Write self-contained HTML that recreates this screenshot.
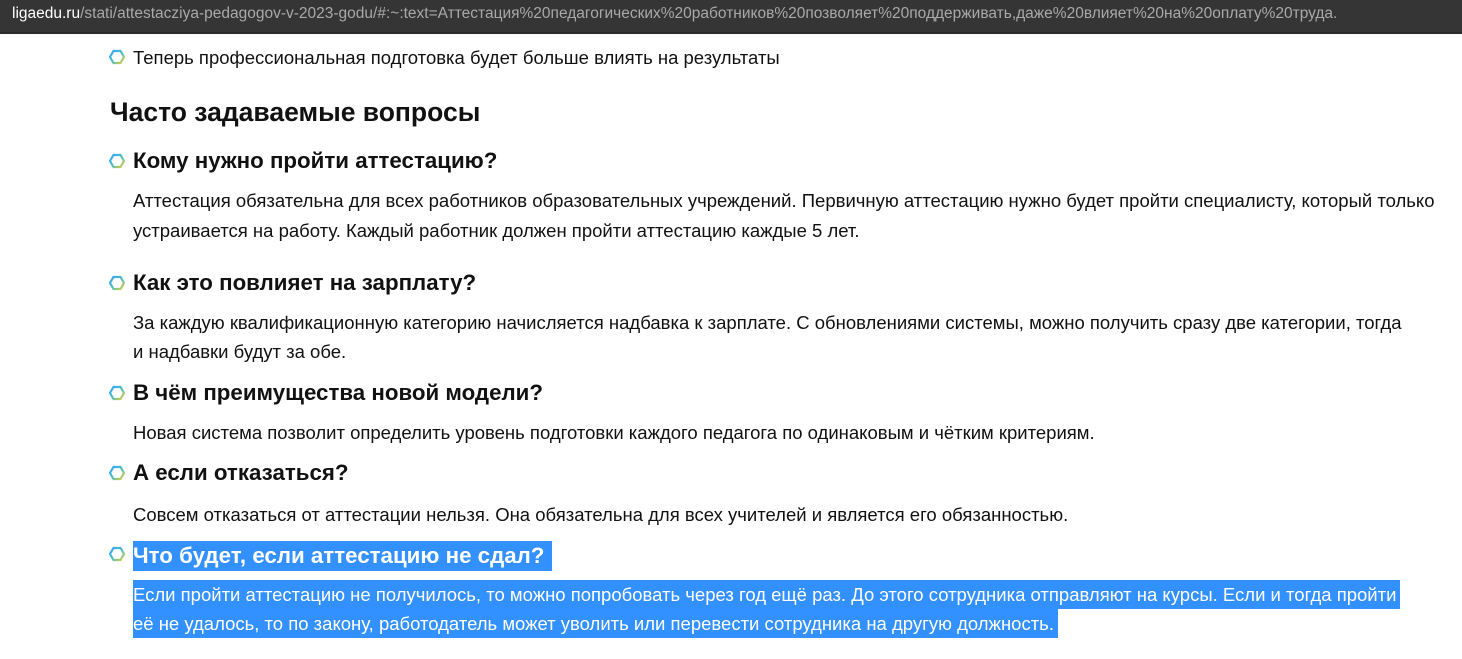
<!DOCTYPE html>
<html><head><meta charset="utf-8"><style>
body{margin:0;width:1462px;height:659px;overflow:hidden;background:#fff;font-family:"Liberation Sans",sans-serif;color:#111;position:relative}
.bar{position:absolute;left:0;top:0;width:1462px;height:32px;background:#353535;border-bottom:2px solid #2a2a2a}
.url{position:absolute;left:12px;top:5px;font-size:15.5px;color:#a9a9a9;white-space:nowrap}
.url b{font-weight:normal;color:#fff}
.t{position:absolute;white-space:nowrap}
.p{font-size:18.5px;left:133px}
.h3{font-size:22.3px;font-weight:bold;left:133px}
.hex{position:absolute;left:109px;width:16px;height:16px}
.sel{background:#3390ff;color:#fff}
</style></head><body>
<div class="bar"><div class="url"><b>ligaedu.ru</b>/stati/attestacziya-pedagogov-v-2023-godu/#:~:text=Аттестация%20педагогических%20работников%20позволяет%20поддерживать,даже%20влияет%20на%20оплату%20труда.</div></div>

<svg width="0" height="0" style="position:absolute"><defs><linearGradient id="g" x1="0" y1="0" x2="1" y2="1"><stop offset="0" stop-color="#3aa0ff"/><stop offset="0.5" stop-color="#4cc0c0"/><stop offset="1" stop-color="#e0d040"/></linearGradient></defs></svg>

<svg class="hex" style="top:49px" viewBox="0 0 16 16"><polygon points="4.5,2 11.5,2 15,8 11.5,14 4.5,14 1,8" fill="none" stroke="url(#g)" stroke-width="2.2"/></svg>
<div class="t p" style="top:47px">Теперь профессиональная подготовка будет больше влиять на результаты</div>

<div class="t" style="left:110px;top:97px;font-size:26.5px;font-weight:bold">Часто задаваемые вопросы</div>

<svg class="hex" style="top:153px" viewBox="0 0 16 16"><polygon points="4.5,2 11.5,2 15,8 11.5,14 4.5,14 1,8" fill="none" stroke="url(#g)" stroke-width="2.2"/></svg>
<div class="t h3" style="top:148px">Кому нужно пройти аттестацию?</div>
<div class="t p" style="top:190px">Аттестация обязательна для всех работников образовательных учреждений. Первичную аттестацию нужно будет пройти специалисту, который только</div>
<div class="t p" style="top:220px">устраивается на работу. Каждый работник должен пройти аттестацию каждые 5 лет.</div>

<svg class="hex" style="top:275px" viewBox="0 0 16 16"><polygon points="4.5,2 11.5,2 15,8 11.5,14 4.5,14 1,8" fill="none" stroke="url(#g)" stroke-width="2.2"/></svg>
<div class="t h3" style="top:270px">Как это повлияет на зарплату?</div>
<div class="t p" style="top:312px">За каждую квалификационную категорию начисляется надбавка к зарплате. С обновлениями системы, можно получить сразу две категории, тогда</div>
<div class="t p" style="top:341px">и надбавки будут за обе.</div>

<svg class="hex" style="top:385px" viewBox="0 0 16 16"><polygon points="4.5,2 11.5,2 15,8 11.5,14 4.5,14 1,8" fill="none" stroke="url(#g)" stroke-width="2.2"/></svg>
<div class="t h3" style="top:380px">В чём преимущества новой модели?</div>
<div class="t p" style="top:422px">Новая система позволит определить уровень подготовки каждого педагога по одинаковым и чётким критериям.</div>

<svg class="hex" style="top:465px" viewBox="0 0 16 16"><polygon points="4.5,2 11.5,2 15,8 11.5,14 4.5,14 1,8" fill="none" stroke="url(#g)" stroke-width="2.2"/></svg>
<div class="t h3" style="top:460px">А если отказаться?</div>
<div class="t p" style="top:504px">Совсем отказаться от аттестации нельзя. Она обязательна для всех учителей и является его обязанностью.</div>

<svg class="hex" style="top:546px" viewBox="0 0 16 16"><polygon points="4.5,2 11.5,2 15,8 11.5,14 4.5,14 1,8" fill="none" stroke="url(#g)" stroke-width="2.2"/></svg>
<div class="t h3 sel" style="top:541px;height:30px;line-height:30px;padding-right:8px">Что будет, если аттестацию не сдал?</div>
<div class="t p sel" style="top:580px;height:29px;line-height:29px;padding-right:4px">Если пройти аттестацию не получилось, то можно попробовать через год ещё раз. До этого сотрудника отправляют на курсы. Если и тогда пройти</div>
<div class="t p sel" style="top:609px;height:29px;line-height:29px;padding-right:4px">её не удалось, то по закону, работодатель может уволить или перевести сотрудника на другую должность.</div>
</body></html>
